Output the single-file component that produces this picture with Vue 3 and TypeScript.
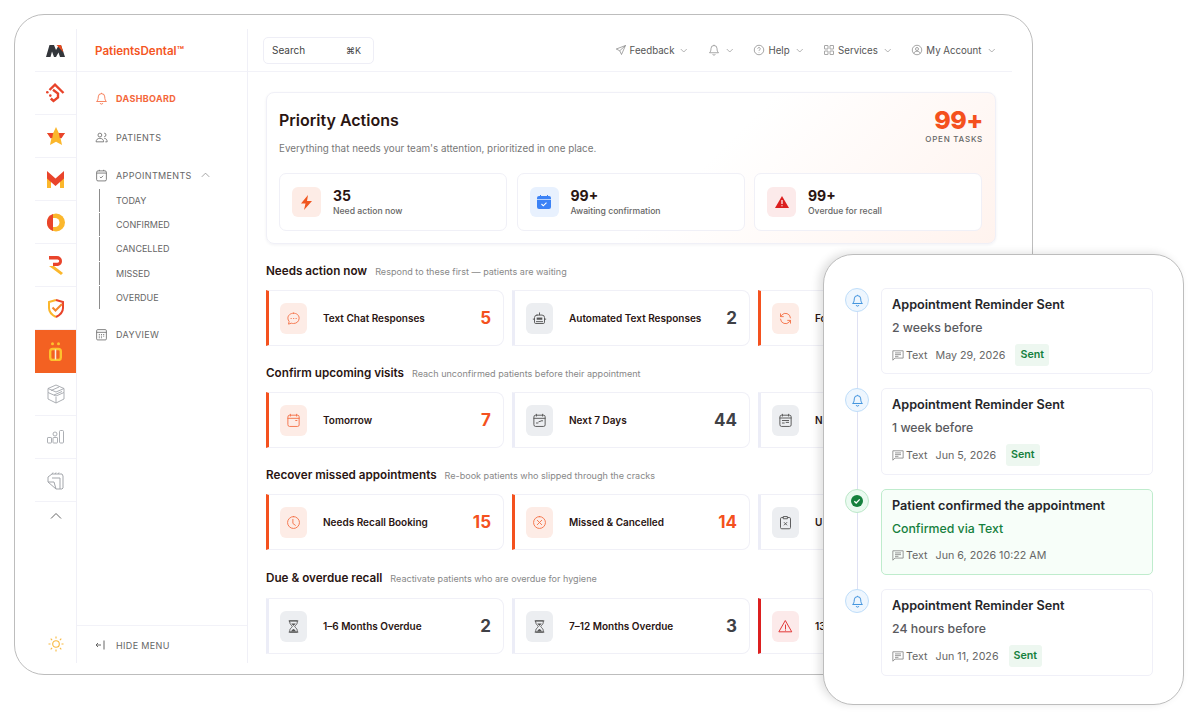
<template>
  <div class="page">
    <div class="frame">
      <aside class="rail">
        <div class="rail__cell rail__cell--top">
          <svg width="19" height="13" viewBox="0 0 19 13"><path d="M0 13 3.500 1H8l2 5 3-5h2l4 12h-5l-1.500-4.500L10 13H8L6 7.500 4.500 13z" fill="#33363b" /><path d="M10.500 1H15l2.500 7.500z" fill="#e8491d" /></svg>
        </div>
        <div class="rail__cell">
          <svg width="20" height="20" viewBox="0 0 20 20" fill="none" stroke="#e8432a" stroke-width="2.400"><path d="M3.500 7 9 1.700 17.500 10" /><path d="M7 6.800 12 10.500v4L7.500 18 4.800 15.500" /><circle cx="1.300" cy="9.300" r="1.300" fill="#e8432a" stroke="none" /><circle cx="4.300" cy="12.600" r="1.300" fill="#e8432a" stroke="none" /></svg>
        </div>
        <div class="rail__cell">
          <svg width="18" height="18" viewBox="0 0 18 18"><path d="M9 0 11.800 6H18L13.500 10.800 15 18 9 14.800 3 18 4.500 10.800 0 6H6.200z" fill="#fbb72c" /><path d="M0 6H6.200L5.200 11 3.500 11.200zM18 6H11.800L12.800 11 14.500 11.200z" fill="#e9442b" /></svg>
        </div>
        <div class="rail__cell">
          <svg width="17" height="17" viewBox="0 0 17 17"><path d="M0 5h4v12H0zM13 5h4v12h-4z" fill="#fbb72c" /><path d="M0 0 8.500 7.500 17 0v7.500L8.500 15 0 7.500z" fill="#e9442b" /></svg>
        </div>
        <div class="rail__cell">
          <svg width="18" height="19" viewBox="0 0 18 19"><circle cx="9" cy="9.500" r="9" fill="#fbb72c" /><path d="M6 1A9 9 0 0 0 6 18z" fill="#e9442b" /><path d="M6 5h2a4.500 4.500 0 0 1 0 9H6z" fill="#fff" /></svg>
        </div>
        <div class="rail__cell">
          <svg width="15" height="19" viewBox="0 0 15 19"><path d="M1 0h8a5 5 0 0 1 5 5A5 5 0 0 1 10 10H5V6.800h4.500a1.700 1.700 0 0 0 0-3.400H1z" fill="#e9442b" /><path d="M1 10h5l9 7-2 2z" fill="#fbb72c" /></svg>
        </div>
        <div class="rail__cell">
          <svg width="16" height="19" viewBox="0 0 16 19" fill="none" stroke-width="2"><path d="M8 1 1 3v6c0 4 3 7 7 9" stroke="#fbb72c" /><path d="M8 1l7 2v6c0 4-3 7-7 9" stroke="#e9442b" /><path d="m4.500 8.500 3 3L14 5" stroke="#f3862d" /></svg>
        </div>
        <div class="rail__cell rail__cell--active">
          <svg width="13" height="19" viewBox="0 0 13 19" fill="none"><rect x="1.200" y="7" width="10.600" height="11" rx="2.500" stroke="#fdc22d" stroke-width="2.400" /><path d="M6.500 7.500v10" stroke="#fbeee0" stroke-width="1.500" /><circle cx="3.500" cy="1.700" r="1.500" fill="#fdc22d" /><circle cx="9.500" cy="1.700" r="1.500" fill="#fdc22d" /></svg>
        </div>
        <div class="rail__cell">
          <svg width="18" height="20" viewBox="0 0 18 20" fill="none" stroke="#a3a6ab" stroke-width=".9"><path d="M9 1 17 4.500v4L9 12 1 8.500v-4zM1 4.500 9 8l8-3.500" /><path d="M1 8.500V15l8 4 8-4V8.500M9 13v6M4 6.500l8-3.500M7 11l8-3.500" /></svg>
        </div>
        <div class="rail__cell">
          <svg width="17" height="14" viewBox="0 0 17 14" fill="none" stroke="#a3a6ab" stroke-width=".9"><rect x=".5" y="7.500" width="4" height="5.500" rx=".6" /><circle cx="8" cy="4" r="2" /><rect x="6" y="7.500" width="4.500" height="5.500" rx=".6" /><rect x="12.500" y=".5" width="4" height="12.500" rx="1" /></svg>
        </div>
        <div class="rail__cell">
          <svg width="17" height="19" viewBox="0 0 17 19" fill="none" stroke="#a3a6ab" stroke-width="1"><path d="M1 6 5 3h10l1 2v12l-1 1H9l-8-7z" /><path d="M5 7h8v11M1 11h6l2 7M5 3 6 1.500M8 3l1-1.500M11 3l1-1.500" /></svg>
        </div>
        <div class="rail__chev">
          <svg width="12" height="8" viewBox="0 0 12 8" fill="none" stroke="#666" stroke-width="1"><path d="m1 6.500 5-5 5 5" /></svg>
        </div>
        <div class="rail__sun">
          <svg width="16" height="16" viewBox="0 0 16 16" fill="none" stroke="#f8b83e" stroke-width="1.100"><circle cx="8" cy="8" r="3.300" /><path d="M8 .5v2M8 13.500v2M.5 8h2M13.500 8h2M2.700 2.700l1.400 1.400M11.900 11.900l1.400 1.400M2.700 13.300l1.400-1.400M11.900 4.100l1.400-1.400" /></svg>
        </div>
      </aside>

      <nav class="side">
        <div class="side__brand">PatientsDental™</div>
        <div class="side__nav">
          <div class="side__item side__item--on">
            <svg class="side__icon" viewBox="0 0 24 24"><path :d="icons.bell" /></svg>
            DASHBOARD
          </div>
          <div class="side__item side__item--patients">
            <svg class="side__icon" viewBox="0 0 24 24"><path :d="icons.users" /></svg>
            PATIENTS
          </div>
          <div class="side__item side__item--appts">
            <svg class="side__icon" viewBox="0 0 24 24"><path :d="icons.calCheck" /></svg>
            APPOINTMENTS
            <svg class="side__chev" viewBox="0 0 12 8"><path d="m1 6.500 5-5 5 5" /></svg>
          </div>
          <div class="side__subs">
            <div v-for="s in subItems" :key="s" class="side__sub">{{ s }}</div>
          </div>
          <div class="side__item side__item--day">
            <svg class="side__icon" viewBox="0 0 24 24"><path :d="icons.calGrid" /></svg>
            DAYVIEW
          </div>
        </div>
        <div class="side__foot">
          <svg width="10" height="10" viewBox="0 0 10 10" fill="none" stroke="#666" stroke-width="1"><path d="M6 5H1M3 3 1 5l2 2M9 .5v9" /></svg>
          HIDE MENU
        </div>
      </nav>

      <main class="main">
        <header class="top">
          <div class="search"><span>Search</span><span class="search__key">⌘K</span></div>
          <div class="top__menu">
            <div v-for="m in topMenu" :key="m.key" class="top__item">
              <svg class="top__icon" viewBox="0 0 24 24"><path :d="icons[m.icon]" /></svg>
              <span v-if="m.label">{{ m.label }}</span>
              <svg class="top__chev" viewBox="0 0 10 6"><path d="m1 1 4 4 4-4" /></svg>
            </div>
          </div>
        </header>

        <div class="body">
          <section class="panel">
            <div class="panel__head">
              <div>
                <h1 class="panel__title">Priority Actions</h1>
                <p class="panel__sub">Everything that needs your team's attention, prioritized in one place.</p>
              </div>
              <div class="panel__total">
                <div class="panel__num">99+</div>
                <div class="panel__cap">OPEN TASKS</div>
              </div>
            </div>
            <div class="panel__stats">
              <div class="stat">
                <div class="stat__icon stat__icon--orange">
                  <svg width="11" height="15" viewBox="0 0 11 15"><path d="M7 0 0 8.500h4.500L3 15l8-9H6z" fill="#f0561f" /></svg>
                </div>
                <div><div class="stat__num">35</div><div class="stat__label">Need action now</div></div>
              </div>
              <div class="stat">
                <div class="stat__icon stat__icon--blue">
                  <svg width="14" height="14" viewBox="0 0 14 14"><rect y="1" width="14" height="13" rx="2" fill="#3b82f6" /><path d="M3.500 0v2M10.500 0v2" stroke="#3b82f6" /><path d="M0 4.500h14" stroke="#e9f2ff" stroke-width=".7" /><path d="m4.500 9 1.800 1.800 3.200-3.200" fill="none" stroke="#fff" stroke-width="1.100" /></svg>
                </div>
                <div><div class="stat__num">99+</div><div class="stat__label">Awaiting confirmation</div></div>
              </div>
              <div class="stat">
                <div class="stat__icon stat__icon--red">
                  <svg width="14" height="12" viewBox="0 0 14 12"><path d="M7 0 14 12H0z" fill="#dc1f1f" /><path d="M7 4v4M7 9.200v1.100" stroke="#fff" stroke-width="1.200" /></svg>
                </div>
                <div><div class="stat__num">99+</div><div class="stat__label">Overdue for recall</div></div>
              </div>
            </div>
          </section>

          <section v-for="g in groups" :key="g.title" class="group">
            <div class="group__head">
              <h2 class="group__title">{{ g.title }}</h2>
              <span class="group__sub">{{ g.sub }}</span>
            </div>
            <div class="group__row">
              <div
                v-for="c in g.cards"
                :key="c.label"
                class="tile"
                :class="`tile--${c.tone}`"
              >
                <div class="tile__icon">
                  <svg viewBox="0 0 24 24">
                    <path :d="icons[c.icon]" />
                    <path v-if="solids[c.icon]" class="tile__solid" :d="solids[c.icon]" />
                  </svg>
                </div>
                <span class="tile__label">{{ c.label }}</span>
                <span v-if="c.count" class="tile__count">{{ c.count }}</span>
              </div>
            </div>
          </section>
        </div>
      </main>
    </div>

    <div class="float">
      <div class="float__line"></div>
      <div
        v-for="t in timeline"
        :key="t.date"
        class="event"
        :class="{ 'event--ok': t.confirmed }"
      >
        <div class="event__node">
          <svg v-if="t.confirmed" width="12" height="12" viewBox="0 0 12 12"><circle cx="6" cy="6" r="6" fill="#15803d" /><path d="m3.300 6.200 1.900 1.800 3.500-3.600" fill="none" stroke="#fff" stroke-width="1.300" /></svg>
          <svg v-else class="event__bell" viewBox="0 0 24 24"><path :d="icons.bell" /></svg>
        </div>
        <div class="event__card">
          <div class="event__title">{{ t.title }}</div>
          <div class="event__sub">{{ t.sub }}</div>
          <div class="event__meta">
            <svg class="event__chat" viewBox="0 0 14 14"><path d="M1 1.500h12v8.500H3.500L1 12.500zM3.500 4h7M3.500 6h7M3.500 8h4" /></svg>
            <span>Text</span>
            <span class="event__date">{{ t.date }}</span>
            <span v-if="!t.confirmed" class="event__badge">Sent</span>
          </div>
        </div>
      </div>
    </div>
  </div>
</template>

<script setup lang="ts">
const icons: Record<string, string> = {
  bell: 'M12 3a6 6 0 0 0-6 6c0 5-1.500 7-3 8.500h18c-1.500-1.500-3-3.500-3-8.500a6 6 0 0 0-6-6zM12 1.500V3M9.500 20.500a2.600 2.600 0 0 0 5 0',
  users: 'M9 4a3.500 3.500 0 1 0 0 7 3.500 3.500 0 0 0 0-7zM17 4a3 3 0 1 1 0 6.500M2 20c0-4 3-6.500 7-6.500s7 2.500 7 6.500zM17 13.500c3 0 5.500 2.500 5.500 6.500H19',
  calCheck: 'M3 6a2.500 2.500 0 0 1 2.500-2.500h13A2.500 2.500 0 0 1 21 6v13.500a2.500 2.500 0 0 1-2.500 2.500h-13A2.500 2.500 0 0 1 3 19.500zM3 7.500h18M8 1.500v2M16 1.500v2M9 14.500l2 2 4-4',
  calGrid: 'M3 5a2 2 0 0 1 2-2h14a2 2 0 0 1 2 2v15a2 2 0 0 1-2 2H5a2 2 0 0 1-2-2zM3 8h18M7 12h2M11 12h2M15 12h2M7 15h2M11 15h2M15 15h2M7 18h2M11 18h2',
  send: 'M21 3 2.500 10l7 3.500L13 21zM21 3 9.500 13.500',
  help: 'M12 2.500a9.500 9.500 0 1 0 0 19 9.500 9.500 0 0 0 0-19zM9.500 9.500a2.500 2.500 0 1 1 3.800 2.100c-.9.600-1.300 1.100-1.300 2.400M12 16.500v1',
  grid: 'M3.500 3h6a.5.5 0 0 1 .5.500v6a.5.5 0 0 1-.5.500h-6a.5.5 0 0 1-.5-.5v-6a.5.5 0 0 1 .5-.5zM14.500 3h6a.5.5 0 0 1 .5.500v6a.5.5 0 0 1-.5.500h-6a.5.5 0 0 1-.5-.5v-6a.5.5 0 0 1 .5-.5zM3.500 14h6a.5.5 0 0 1 .5.500v6a.5.5 0 0 1-.5.500h-6a.5.5 0 0 1-.5-.5v-6a.5.5 0 0 1 .5-.5zM14.500 14h6a.5.5 0 0 1 .5.500v6a.5.5 0 0 1-.5.500h-6a.5.5 0 0 1-.5-.5v-6a.5.5 0 0 1 .5-.5z',
  account: 'M12 2.500a9.500 9.500 0 1 0 0 19 9.500 9.500 0 0 0 0-19zM12 7a3 3 0 1 0 0 6 3 3 0 0 0 0-6zM5.500 19c1-3 3.500-4.500 6.500-4.500s5.500 1.500 6.500 4.500',
  chat: 'M12 3.500c-5 0-9 3.500-9 8 0 2 .8 3.800 2 5.200L4 21l4.500-1.500c1.100.4 2.300.5 3.500.5 5 0 9-3.500 9-8.500s-4-8-9-8zM8 12h.5M12 12h.5M16 12h.5',
  robot: 'M12 3v3M8 6.500h8a4 4 0 0 1 4 4V18a2 2 0 0 1-2 2H6a2 2 0 0 1-2-2v-7.500a4 4 0 0 1 4-4zM4 13H2M22 13h-2M7 17h10',
  sync: 'M20 11a8 8 0 0 0-14-4.500L4 9M4 4.500V9h4.500M4 13a8 8 0 0 0 14 4.500L20 15M20 19.500V15h-4.500',
  calendar: 'M3 6a2.500 2.500 0 0 1 2.500-2.500h13A2.500 2.500 0 0 1 21 6v13a2.500 2.500 0 0 1-2.500 2.500h-13A2.500 2.500 0 0 1 3 19zM3 8.500h18M7 2v3M17 2v3M15.500 12h2',
  calNext: 'M3 6a2.500 2.500 0 0 1 2.500-2.500h13A2.500 2.500 0 0 1 21 6v13a2.500 2.500 0 0 1-2.500 2.500h-13A2.500 2.500 0 0 1 3 19zM3 8.500h18M7 2v3M17 2v3M7 16h2.500M11 14l3-1M15 12.500h2',
  calMonth: 'M3 6a2.500 2.500 0 0 1 2.500-2.500h13A2.500 2.500 0 0 1 21 6v13a2.500 2.500 0 0 1-2.500 2.500h-13A2.500 2.500 0 0 1 3 19zM3 8h18M7 2v3M17 2v3M7 12h10M7 16h3M13 15h4',
  clock: 'M12 2.500a9.500 9.500 0 1 0 0 19 9.500 9.500 0 0 0 0-19zM11 7v6.500l4 3',
  cross: 'M12 2.500a9.500 9.500 0 1 0 0 19 9.500 9.500 0 0 0 0-19zM8.500 8.500l7 7M15.500 8.500l-7 7',
  clip: 'M8 4H6a2 2 0 0 0-2 2v14a2 2 0 0 0 2 2h12a2 2 0 0 0 2-2V6a2 2 0 0 0-2-2h-2M9 2.500h6v3.500H9zM10 12l4 4M14 12l-4 4',
  hourglass: 'M6 3h12v2.500c0 3-3 4.500-4 6.500 1 2 4 3.500 4 6.500V21H6v-2.500c0-3 3-4.500 4-6.500-1-2-4-3.500-4-6.500zM5 3h14M5 21h14',
  alert: 'M12 3 22 20.500H2zM12 9.500v6M12 17.500v.5',
}

// darker filled bits that sit on top of the outlined icons
const solids: Record<string, string> = {
  robot: 'M7.500 10.500h9v3.500h-9z',
  hourglass: 'M8 20c.5-2 3-3.500 4-4 1 .5 3.500 2 4 4zM8.500 7h7c-.8 1.500-2.500 2.500-3.500 4-1-1.500-2.700-2.500-3.500-4z',
}

const subItems = ['TODAY', 'CONFIRMED', 'CANCELLED', 'MISSED', 'OVERDUE']

const topMenu = [
  { key: 'feedback', label: 'Feedback', icon: 'send' },
  { key: 'bell', label: '', icon: 'bell' },
  { key: 'help', label: 'Help', icon: 'help' },
  { key: 'services', label: 'Services', icon: 'grid' },
  { key: 'account', label: 'My Account', icon: 'account' },
]

// third column runs under the floating card, only its first letters show
const groups = [
  {
    title: 'Needs action now',
    sub: 'Respond to these first — patients are waiting',
    cards: [
      { label: 'Text Chat Responses', count: '5', icon: 'chat', tone: 'orange' },
      { label: 'Automated Text Responses', count: '2', icon: 'robot', tone: 'grey' },
      { label: 'Fo', count: '', icon: 'sync', tone: 'orange' },
    ],
  },
  {
    title: 'Confirm upcoming visits',
    sub: 'Reach unconfirmed patients before their appointment',
    cards: [
      { label: 'Tomorrow', count: '7', icon: 'calendar', tone: 'orange' },
      { label: 'Next 7 Days', count: '44', icon: 'calNext', tone: 'grey' },
      { label: 'N', count: '', icon: 'calMonth', tone: 'grey' },
    ],
  },
  {
    title: 'Recover missed appointments',
    sub: 'Re-book patients who slipped through the cracks',
    cards: [
      { label: 'Needs Recall Booking', count: '15', icon: 'clock', tone: 'orange' },
      { label: 'Missed & Cancelled', count: '14', icon: 'cross', tone: 'orange' },
      { label: 'U', count: '', icon: 'clip', tone: 'grey' },
    ],
  },
  {
    title: 'Due & overdue recall',
    sub: 'Reactivate patients who are overdue for hygiene',
    cards: [
      { label: '1–6 Months Overdue', count: '2', icon: 'hourglass', tone: 'grey' },
      { label: '7–12 Months Overdue', count: '3', icon: 'hourglass', tone: 'grey' },
      { label: '13', count: '', icon: 'alert', tone: 'red' },
    ],
  },
]

const timeline = [
  { title: 'Appointment Reminder Sent', sub: '2 weeks before', date: 'May 29, 2026', confirmed: false },
  { title: 'Appointment Reminder Sent', sub: '1 week before', date: 'Jun 5, 2026', confirmed: false },
  { title: 'Patient confirmed the appointment', sub: 'Confirmed via Text', date: 'Jun 6, 2026 10:22 AM', confirmed: true },
  { title: 'Appointment Reminder Sent', sub: '24 hours before', date: 'Jun 11, 2026', confirmed: false },
]
</script>

<style>
html,
body {
  background: #fff;
  overflow: hidden;
}
</style>

<style scoped>
.page {
  position: relative;
  width: 1200px;
  height: 723px;
  padding: 14px 0 0 14px;
  box-sizing: border-box;
  font-family: Inter, "Liberation Sans", sans-serif;
  color: #2a1512;
}

.frame {
  display: flex;
  width: 1019px;
  height: 661px;
  box-sizing: border-box;
  padding: 14px 20px 11px 20px;
  background: #fff;
  border: 1px solid #bdbdbd;
  border-radius: 30px;
}

.rail {
  display: flex;
  flex-direction: column;
  width: 42px;
  flex: none;
  border-right: 1px solid #f0f0f7;
  box-sizing: border-box;
}

.rail__cell {
  display: flex;
  align-items: center;
  justify-content: center;
  flex: none;
  height: 43px;
  box-sizing: border-box;
  border-bottom: 1px solid #f2f2f8;
}

.rail__cell--active {
  background: #f36122;
  border-bottom: none;
}

.rail__chev {
  display: flex;
  justify-content: center;
  padding-top: 10px;
}

.rail__sun {
  display: flex;
  justify-content: center;
  margin-top: auto;
  padding-bottom: 11px;
}

.side {
  display: flex;
  flex-direction: column;
  width: 171px;
  flex: none;
  box-sizing: border-box;
  border-right: 1px solid #f0f0f7;
}

.side__brand {
  height: 43px;
  flex: none;
  box-sizing: border-box;
  padding: 15px 0 0 18px;
  border-bottom: 1px solid #f2f2f8;
  font-size: 11.600px;
  font-weight: 600;
  line-height: 14px;
  color: #f4561f;
}

.side__nav {
  flex: 1;
  padding: 19px 0 0 18px;
}

.side__item {
  display: flex;
  align-items: center;
  height: 14px;
  font-size: 9px;
  letter-spacing: .35px;
  color: #666;
}

.side__item--on {
  font-weight: 700;
  color: #f4663a;
}

.side__item--patients {
  margin-top: 25px;
}

.side__item--appts {
  margin-top: 24px;
}

.side__item--day {
  margin-top: 19px;
}

.side__icon {
  width: 13px;
  height: 13px;
  margin-right: 8px;
  fill: none;
  stroke: #666;
  stroke-width: 1.500;
}

.side__item--on .side__icon {
  stroke: #f4663a;
}

.side__chev {
  width: 9px;
  height: 6px;
  margin-left: 9px;
  fill: none;
  stroke: #888;
  stroke-width: 1;
}

.side__subs {
  margin: 7px 0 0 4px;
}

.side__sub {
  display: flex;
  align-items: center;
  height: 23.200px;
  margin-bottom: 1px;
  padding-left: 16px;
  border-left: 1px solid #8c8c8c;
  font-size: 9px;
  color: #666;
}

.side__foot {
  display: flex;
  align-items: center;
  gap: 11px;
  height: 38px;
  flex: none;
  box-sizing: border-box;
  padding: 1px 0 0 18px;
  border-top: 1px solid #f2f2f8;
  font-size: 9px;
  letter-spacing: .35px;
  color: #666;
}

.main {
  display: flex;
  flex-direction: column;
  flex: 1;
  min-width: 0;
}

.top {
  display: flex;
  align-items: center;
  justify-content: space-between;
  height: 43px;
  flex: none;
  box-sizing: border-box;
  padding: 0 17px 0 15px;
  border-bottom: 1px solid #f2f2f8;
}

.search {
  display: flex;
  align-items: center;
  justify-content: space-between;
  width: 111px;
  height: 27px;
  box-sizing: border-box;
  padding: 0 12px 0 8px;
  border: 1px solid #eeeef6;
  border-radius: 5px;
  font-size: 10px;
  color: #444;
}

.search__key {
  font-size: 9px;
}

.top__menu {
  display: flex;
  align-items: center;
  gap: 20px;
}

.top__item {
  display: flex;
  align-items: center;
  gap: 3px;
  font-size: 9.700px;
  color: #555;
}

.top__icon {
  width: 12px;
  height: 12px;
  fill: none;
  stroke: #777;
  stroke-width: 1.300;
}

.top__chev {
  width: 7.500px;
  height: 5px;
  margin-left: 3px;
  fill: none;
  stroke: #999;
  stroke-width: 1;
}

.body {
  padding: 20px 16px 0 18px;
}

.panel {
  box-sizing: border-box;
  height: 152px;
  padding: 13px 13px 0 12px;
  border: 1px solid #f0f0f7;
  border-radius: 8px;
  background: linear-gradient(135deg, #fff 58%, #fff3ee 100%);
  box-shadow: 0 1px 3px rgba(40, 40, 80, .06);
}

.panel__head {
  display: flex;
  justify-content: space-between;
  height: 67px;
}

.panel__title {
  margin: 4px 0 0;
  font-size: 16px;
  font-weight: 600;
  line-height: 20px;
  color: #2a1512;
}

.panel__sub {
  margin: 12px 0 0;
  font-size: 9.850px;
  line-height: 13px;
  color: #777;
}

.panel__total {
  margin-right: -1px;
  padding-top: 1px;
  text-align: right;
}

.panel__num {
  font-size: 25px;
  font-weight: 800;
  line-height: 27px;
  letter-spacing: -.5px;
  color: #f4511e;
}

.panel__cap {
  font-size: 8px;
  font-weight: 500;
  letter-spacing: .75px;
  color: #666;
}

.panel__stats {
  display: grid;
  grid-template-columns: repeat(3, 1fr);
  gap: 9.500px;
}

.stat {
  display: flex;
  align-items: center;
  gap: 12px;
  height: 58px;
  box-sizing: border-box;
  padding-left: 12px;
  border: 1px solid #f0f0f7;
  border-radius: 7px;
  background: #fff;
}

.stat__icon {
  display: flex;
  align-items: center;
  justify-content: center;
  width: 29px;
  height: 30px;
  border-radius: 6px;
}

.stat__icon--orange {
  background: #fdece6;
}

.stat__icon--blue {
  background: #e8f1fe;
}

.stat__icon--red {
  background: #fceaea;
}

.stat__num {
  font-size: 14px;
  font-weight: 700;
  line-height: 15px;
  color: #2a1512;
}

.stat__label {
  margin-top: 3px;
  font-size: 8.650px;
  font-weight: 500;
  line-height: 10px;
  color: #666;
}

.group__head {
  display: flex;
  align-items: baseline;
  gap: 8px;
  height: 46px;
  box-sizing: border-box;
  padding-top: 20px;
}

.group:last-child .group__head {
  height: 48px;
  padding-top: 21px;
}

.group__title {
  margin: 0;
  font-size: 11.700px;
  font-weight: 600;
  line-height: 14px;
  color: #2a1512;
}

.group__sub {
  font-size: 9.050px;
  color: #888;
}

.group__row {
  display: grid;
  grid-template-columns: repeat(3, 1fr);
  gap: 8px;
}

.tile {
  display: flex;
  align-items: center;
  height: 56px;
  box-sizing: border-box;
  padding: 0 12px 0 11px;
  border: 1px solid #f0f0f7;
  border-left: 3px solid #ecedf7;
  border-radius: 0 8px 8px 0;
  background: #fff;
}

.tile--orange {
  border-left-color: #f4511e;
}

.tile--red {
  border-left-color: #dc1f1f;
}

.tile__icon {
  display: flex;
  align-items: center;
  justify-content: center;
  flex: none;
  width: 27px;
  height: 31px;
  border-radius: 6px;
  background: #eceef1;
}

.tile__icon svg {
  width: 15px;
  height: 15px;
  fill: none;
  stroke: #555;
  stroke-width: 1.500;
  stroke-linecap: round;
  stroke-linejoin: round;
}

.tile__solid {
  fill: #555;
  stroke: none;
}

.tile--orange .tile__icon {
  background: #fdece6;
}

.tile--orange .tile__icon svg {
  stroke: #f4734a;
}

.tile--red .tile__icon {
  background: #fceaea;
}

.tile--red .tile__icon svg {
  stroke: #e02c2c;
}

.tile__label {
  flex: 1;
  margin-left: 16px;
  font-size: 10px;
  font-weight: 600;
  color: #2a1512;
  white-space: nowrap;
}

.tile__count {
  font-size: 17px;
  font-weight: 700;
  color: #3f4146;
}

.tile--orange .tile__count {
  color: #f4511e;
}

.tile--red .tile__count {
  color: #dc1f1f;
}

.float {
  position: absolute;
  left: 823px;
  top: 254px;
  display: flex;
  flex-direction: column;
  gap: 14px;
  width: 361px;
  height: 451px;
  box-sizing: border-box;
  padding: 33px 30px 0 21px;
  background: #fff;
  border: 1px solid #bdbdbd;
  border-radius: 30px;
  box-shadow: -4px -1px 8px rgba(0, 0, 0, .12);
}

.float__line {
  position: absolute;
  left: 33px;
  top: 50px;
  width: 1px;
  height: 300px;
  background: #dfe1f3;
}

.event {
  position: relative;
  display: flex;
  gap: 12px;
}

.event__node {
  display: flex;
  align-items: center;
  justify-content: center;
  flex: none;
  width: 24px;
  height: 24px;
  box-sizing: border-box;
  border: 1px solid #bfdefa;
  border-radius: 50%;
  background: #eef6fe;
}

.event--ok .event__node {
  border-color: #bce8c9;
  background: #eafaf0;
}

.event__bell {
  width: 13px;
  height: 13px;
  fill: none;
  stroke: #3b8fdc;
  stroke-width: 1.800;
}

.event__card {
  flex: 1;
  box-sizing: border-box;
  height: 86.400px;
  padding: 8px 10px 0;
  border: 1px solid #f0f0f8;
  border-radius: 5px;
  background: #fff;
}

.event--ok .event__card {
  border-color: #bfeccd;
  background: #f7fef9;
}

.event__title {
  font-size: 12.700px;
  font-weight: 600;
  line-height: 15px;
  color: #26262a;
}

.event__sub {
  margin-top: 8px;
  font-size: 12.300px;
  font-weight: 500;
  line-height: 15px;
  color: #5a5a5e;
}

.event--ok .event__sub {
  color: #15803d;
}

.event__meta {
  display: flex;
  align-items: center;
  height: 22px;
  margin-top: 9px;
  font-size: 10.700px;
  color: #666;
}

.event__chat {
  width: 12px;
  height: 13px;
  margin-right: 2px;
  fill: none;
  stroke: #888;
  stroke-width: 1;
}

.event__date {
  margin-left: 8px;
}

.event__badge {
  margin-left: 10px;
  padding: 4px 5px;
  border-radius: 3px;
  background: #edf7f0;
  font-size: 10.700px;
  font-weight: 600;
  line-height: 14px;
  color: #15803d;
}
</style>
